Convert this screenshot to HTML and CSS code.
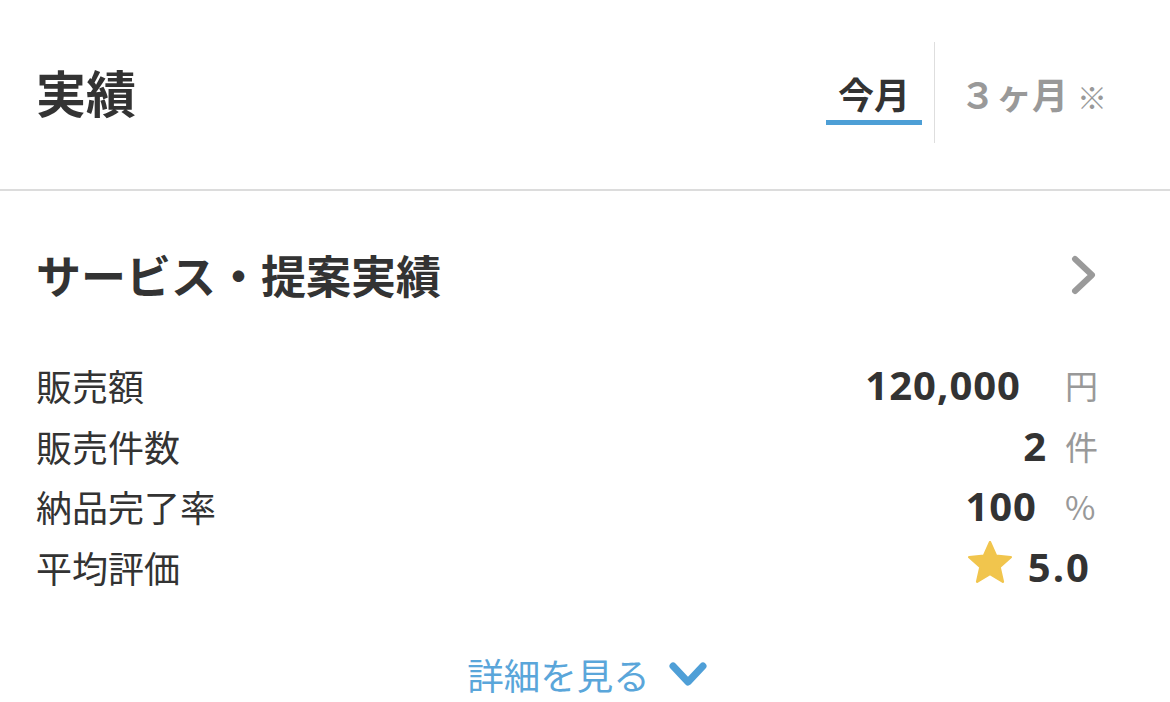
FILE: index.html
```html
<!DOCTYPE html>
<html lang="ja">
<head>
<meta charset="utf-8">
<title>実績</title>
<link rel="stylesheet" href="styles.css">
</head>
<body>
<div class="page">
  <header class="header">
    <h1 class="title">実績</h1>
    <nav class="tabs">
      <div class="tab tab-active">今月</div>
      <div class="tab-divider"></div>
      <div class="tab tab-inactive"><span class="tab-strong">３ヶ月</span><span class="tab-note">※</span></div>
    </nav>
  </header>
  <section class="section">
    <div class="section-head">
      <h2 class="section-title">サービス・提案実績</h2>
      <svg class="chev-right" width="26" height="40" viewBox="0 0 26 40"><path d="M4 4 L21 20 L4 36" fill="none" stroke="#9a9a9a" stroke-width="6" stroke-linecap="round" stroke-linejoin="round"/></svg>
    </div>
    <div class="stats">
      <div class="stat-row">
        <span class="stat-label">販売額</span>
        <span class="stat-value">120,000</span><span class="stat-unit unit-yen">円</span>
      </div>
      <div class="stat-row">
        <span class="stat-label">販売件数</span>
        <span class="stat-value">2</span><span class="stat-unit unit-ken">件</span>
      </div>
      <div class="stat-row">
        <span class="stat-label">納品完了率</span>
        <span class="stat-value">100</span><span class="stat-unit unit-pct">%</span>
      </div>
      <div class="stat-row">
        <span class="stat-label">平均評価</span>
        <svg class="star" width="44" height="44" viewBox="1.4 1.2 21.2 21.2"><path d="M12 1.8 L14.9 8.3 L22 9 L16.6 13.8 L18.2 20.8 L12 17.1 L5.8 20.8 L7.4 13.8 L2 9 L9.1 8.3 Z" fill="#f1c54d" stroke="#f1c54d" stroke-width="1.2" stroke-linejoin="round"/></svg>
        <span class="stat-value rating">5.0</span>
      </div>
    </div>
    <div class="more">
      <span class="more-text">詳細を見る</span>
      <svg class="chev-down" width="40" height="28" viewBox="0 0 40 28"><path d="M5 5 L20 21 L35 5" fill="none" stroke="#4f9fd7" stroke-width="7" stroke-linecap="round" stroke-linejoin="round"/></svg>
    </div>
  </section>
</div>
</body>
</html>
```
FILE: styles.css
```css
* { box-sizing: border-box; }
html, body { margin: 0; padding: 0; background: #fff; }
body {
  font-family: "Noto Sans CJK JP", "Noto Sans", sans-serif;
  color: #333;
  width: 1170px;
  height: 702px;
  overflow: hidden;
}
.header {
  height: 191px;
  border-bottom: 2px solid #dcdcdc;
  display: flex;
  align-items: flex-start;
  justify-content: space-between;
  padding: 0 63px 0 36px;
}
.title {
  margin: 0;
  margin-top: 66px;
  font-size: 50px;
  line-height: 50px;
  font-weight: 700;
}
.tabs {
  display: flex;
  align-items: flex-start;
  margin-top: 42px;
  height: 101px;
}
.tab {
  font-size: 36px;
  line-height: 36px;
  font-weight: 700;
}
.tab-active {
  padding: 33px 12px 9px;
  border-bottom: 5px solid #4d9fd6;
  color: #333;
}
.tab-divider {
  width: 1px;
  height: 101px;
  background: #dedede;
  margin-left: 12px;
}
.tab-inactive {
  padding-top: 33px;
  margin-left: 25px;
  color: #999;
}
.tab-note {
  font-weight: 400;
  font-size: 30px;
  margin-left: 9px;
}
.section {
  padding: 0 73px 0 36px;
}
.section-head {
  display: flex;
  align-items: center;
  justify-content: space-between;
  margin-top: 61px;
  height: 46px;
}
.section-title {
  margin: 0;
  font-size: 45px;
  line-height: 46px;
  font-weight: 700;
}
.stats {
  margin-top: 57px;
  margin-right: -2px;
}
.stat-row {
  display: flex;
  align-items: center;
  height: 60.5px;
}
.stat-label {
  font-size: 36px;
  line-height: 40px;
  flex: 1;
}
.stat-value {
  font-family: "Open Sans", "Noto Sans CJK JP", sans-serif;
  font-size: 40px;
  line-height: 40px;
  font-weight: 700;
  letter-spacing: 1px;
}
.stat-unit {
  font-size: 33px;
  line-height: 40px;
  color: #999;
  width: 34px;
  text-align: left;
}
.unit-yen { margin-left: 44px; }
.unit-ken { margin-left: 18px; }
.unit-pct { margin-left: 28px; }
.star { margin-right: 16px; margin-top: -8px; }
.rating { margin-right: 8px; letter-spacing: 2px; }
.more {
  display: flex;
  align-items: center;
  justify-content: center;
  gap: 18px;
  margin-top: 58px;
  padding-left: 42px;
}
.more-text {
  font-size: 36.5px;
  line-height: 40px;
  color: #5aa6da;
}
```
